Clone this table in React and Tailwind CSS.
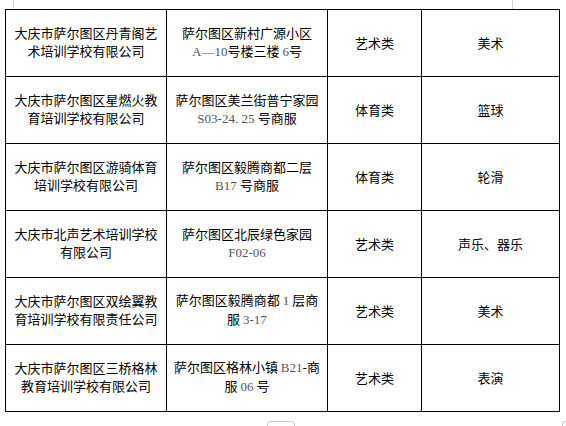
const ROWS = [
  {
    id: "r1",
    name: ["大庆市萨尔图区丹青阁艺", "术培训学校有限公司"],
    addr: [
      [["萨尔图区新村广源小区", "cn"]],
      [["A—10", "num"], ["号楼三楼 ", "cn"], ["6", "num"], ["号", "cn"]],
    ],
    type: "艺术类",
    item: "美术",
  },
  {
    id: "r2",
    name: ["大庆市萨尔图区星燃火教", "育培训学校有限公司"],
    addr: [
      [["萨尔图区美兰街普宁家园", "cn"]],
      [["S03-24. 25 ", "num"], ["号商服", "cn"]],
    ],
    type: "体育类",
    item: "篮球",
  },
  {
    id: "r3",
    name: ["大庆市萨尔图区游骑体育", "培训学校有限公司"],
    addr: [
      [["萨尔图区毅腾商都二层", "cn"]],
      [["B17 ", "num"], ["号商服", "cn"]],
    ],
    type: "体育类",
    item: "轮滑",
  },
  {
    id: "r4",
    name: ["大庆市北声艺术培训学校", "有限公司"],
    addr: [[["萨尔图区北辰绿色家园", "cn"]], [["F02-06", "num"]]],
    type: "艺术类",
    item: "声乐、器乐",
  },
  {
    id: "r5",
    name: ["大庆市萨尔图区双绘翼教", "育培训学校有限责任公司"],
    addr: [
      [["萨尔图区毅腾商都 ", "cn"], ["1", "num"], [" 层商", "cn"]],
      [["服 ", "cn"], ["3-17", "num"]],
    ],
    type: "艺术类",
    item: "美术",
  },
  {
    id: "r6",
    name: ["大庆市萨尔图区三桥格林", "教育培训学校有限公司"],
    addr: [
      [["萨尔图区格林小镇 ", "cn"], ["B21", "num"], ["-商", "cn"]],
      [["服 ", "cn"], ["06", "num"], [" 号", "cn"]],
    ],
    type: "艺术类",
    item: "表演",
  },
];

const CN = "font-['Noto_Sans_CJK_SC',sans-serif]";

function Part({ text, kind }) {
  if (kind === "num") {
    return <span className="font-['Liberation_Serif',serif] text-[13px] text-[#555]">{text}</span>;
  }
  return <span>{text}</span>;
}

export default function App() {
  return (
    <div className={`relative h-[426px] w-[566px] overflow-hidden bg-white ${CN}`}>
      <span className="absolute left-[13px] top-0 h-[9px] w-px bg-[#d4d4d4]" />
      <span className="absolute left-[512px] top-0 h-[9px] w-px bg-[#d4d4d4]" />
      <span className="absolute left-[267px] top-[421px] h-[10px] w-[28px] rounded-t-[3px] border border-[#c8c8c8]" />
      <span className="absolute left-[562px] top-[421px] h-[10px] w-[6px] rounded-tl-[3px] border-l border-t border-[#c8c8c8]" />

      <div className="pl-[5px] pt-[9px]">
        <table className="w-[554px] table-fixed border-collapse text-[13px] leading-[18px] text-black">
          <colgroup>
            <col className="w-[161px]" />
            <col className="w-[161px]" />
            <col className="w-[94px]" />
            <col className="w-[138px]" />
          </colgroup>
          <tbody>
            {ROWS.map((row) => (
              <tr key={row.id} className="h-[67px]">
                <td className="border border-black p-0 pb-[2px] text-center align-middle">
                  {row.name.map((line) => (
                    <div key={line} className="whitespace-nowrap">{line}</div>
                  ))}
                </td>
                <td className="border border-black p-0 pb-[2px] text-center align-middle">
                  {row.addr.map((line, i) => (
                    <div key={i} className="whitespace-pre">
                      {line.map(([t, k], j) => (
                        <Part key={j} text={t} kind={k} />
                      ))}
                    </div>
                  ))}
                </td>
                <td className="border border-black p-0 text-center align-middle">{row.type}</td>
                <td className="border border-black p-0 text-center align-middle">{row.item}</td>
              </tr>
            ))}
          </tbody>
        </table>
      </div>
    </div>
  );
}
